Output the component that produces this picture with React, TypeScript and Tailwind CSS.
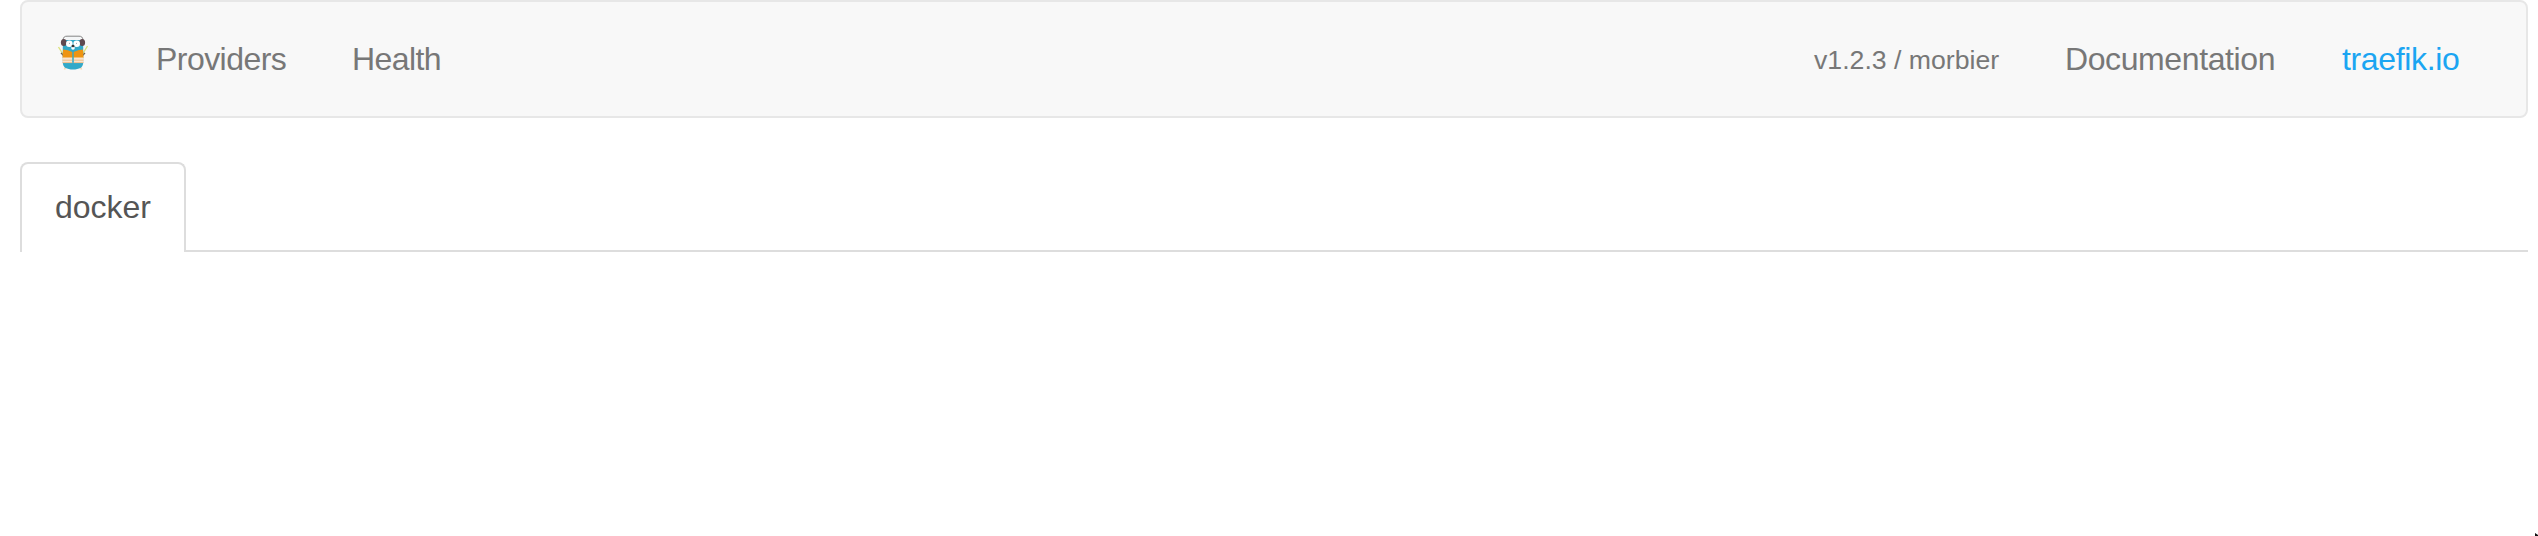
function Logo() {
  return (
    <svg width="34" height="36" viewBox="0 0 34 36" aria-hidden="true">
      <path d="M9.500 32l-1 2.500M24.500 32l1 2.500" stroke="#f3d9b4" strokeWidth="1.6" />
      <path d="M2.500 12l5 8M31.500 11l-5.500 9" stroke="#dce27c" strokeWidth="1.4" />
      <path d="M5 18l3 3M29 18l-3 3" stroke="#6b5a50" strokeWidth="1.3" />
      <path d="M6.800 12C6.800 5 10 4 17 4s10.200 1 10.200 8v15.500c0 5-4 7-10.200 7s-10.200-2-10.200-7z" fill="#32a9c9" />
      <path d="M8.500 1.500h17l-1 3.500h-15z" fill="#f4f6f7" />
      <path d="M7 5C7.500 2 8.500 1.200 11 1.200h12c2.500 0 3.500.8 4 3.800" fill="none" stroke="#858585" strokeWidth="1" />
      <ellipse cx="7.800" cy="7.500" rx="2.900" ry="3.500" fill="#604a50" />
      <ellipse cx="26.200" cy="7.500" rx="2.900" ry="3.500" fill="#604a50" />
      <circle cx="13.300" cy="8.800" r="3.300" fill="#fff" />
      <circle cx="20.700" cy="8.800" r="3.300" fill="#fff" />
      <circle cx="13.500" cy="8.200" r=".5" fill="#789" />
      <circle cx="20.500" cy="8.200" r=".5" fill="#789" />
      <ellipse cx="17" cy="13" rx="1.800" ry="1.800" fill="#fff" />
      <ellipse cx="17" cy="11" rx="1.500" ry="1.200" fill="#333" />
      <path d="M7 14.500q5 0 9.300 2.500v6H6.500zM27 14.500q-5 0-9.300 2.500v6h9.800z" fill="#ee9411" />
      <path d="M6.500 22.500h9.700v5.500H6.500zM17.800 22.500h9.700v5.500h-9.700z" fill="#f8e4ce" />
      <path d="M6.500 25.200h9.700M17.800 25.200h9.700M6.500 27.600h9.700M17.800 27.600h9.700" stroke="#edba86" strokeWidth=".9" />
    </svg>
  );
}

export default function App() {
  return (
    <div className="relative h-[536px] overflow-hidden bg-white pr-[10px] pl-5 text-[32px] leading-[46px] text-[#777] [font-family:'Liberation_Sans',Arial,sans-serif]">
      <nav className="flex h-[118px] items-center justify-between rounded-lg border-2 border-[#e7e7e7] bg-[#f8f8f8] pr-[64px] pl-[34px]">
        <div className="flex items-center">
          <a href="#" className="mr-[66px] mb-[12px] block w-[34px]">
            <Logo />
          </a>
          <a href="#" className="w-[196px] tracking-[-0.55px]">Providers</a>
          <a href="#" className="tracking-[-0.6px]">Health</a>
        </div>
        <div className="flex items-center whitespace-nowrap">
          <span className="w-[251px] pt-0.5 text-[26.67px]">v1.2.3 / morbier</span>
          <a href="#" className="w-[277px] tracking-[-0.4px]">Documentation</a>
          <a href="#" className="w-[120px] tracking-[-0.35px] text-[#1ba5f2]">traefik.io</a>
        </div>
      </nav>
      <div className="mt-11 flex h-[90px]">
        <div className="flex w-[166px] items-center justify-center rounded-t-lg border-2 border-b-0 border-[#ddd] pb-[2px] text-[#555]">
          docker
        </div>
        <div className="flex-1 border-b-2 border-[#ddd]" />
      </div>
      <svg className="absolute right-0 bottom-0" width="3" height="3" viewBox="0 0 3 3" aria-hidden="true">
        <path d="M0 0l3 2v1H0z" fill="#111" />
      </svg>
    </div>
  );
}
